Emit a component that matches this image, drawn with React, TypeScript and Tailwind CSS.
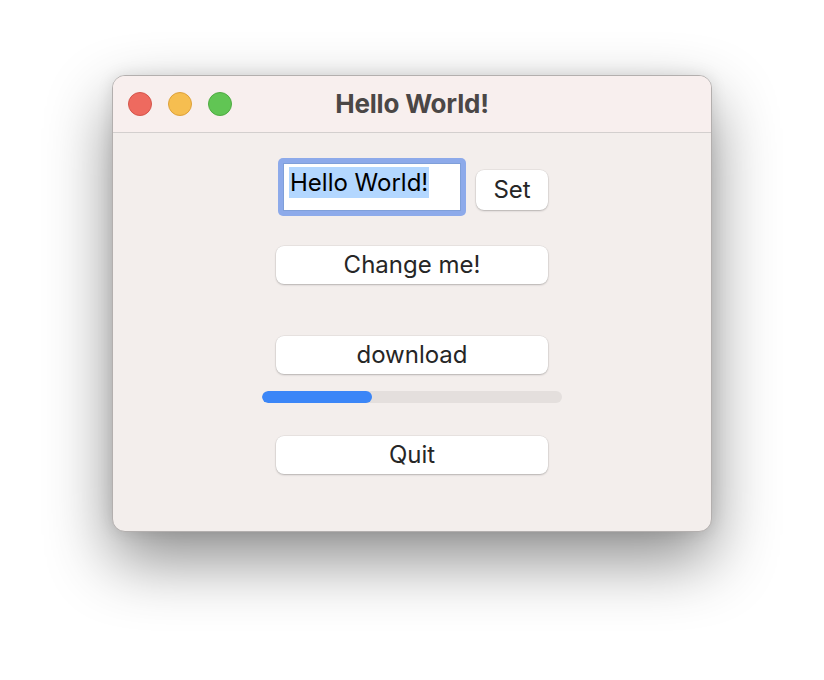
import { useState } from 'react';

const FONT = "font-['Inter','Noto_Sans',sans-serif]";

function MacButton({ label, className = '' }: { label: string; className?: string }) {
  return (
    <button
      className={`h-[38px] rounded-[8px] bg-white text-[24px] leading-none text-[#262626] shadow-[0_1px_2px_rgba(0,0,0,0.22),0_0_0_0.5px_rgba(0,0,0,0.08)] ${className}`}
    >
      {label}
    </button>
  );
}

export default function App() {
  const [progress] = useState(36.7);

  return (
    <div className={`w-[824px] h-[680px] bg-white pt-[75px] ${FONT}`}>
      <div className="ml-[112px] w-[600px] h-[457px] rounded-[13px] overflow-hidden border border-[#b3afae] bg-[#f3eeec] shadow-[0_28px_65px_rgba(0,0,0,0.45),0_0_16px_rgba(0,0,0,0.1)] flex flex-col">
        {/* Title bar */}
        <div className="relative h-[57px] shrink-0 bg-[#f8efee] border-b border-[#d3cfce] flex items-center justify-center">
          <div className="absolute left-[15px] top-[16px] flex gap-[16px]">
            <span className="w-[24px] h-[24px] rounded-full bg-[#ee6a5f] border border-[#d5554b]" />
            <span className="w-[24px] h-[24px] rounded-full bg-[#f6be50] border border-[#dea13a]" />
            <span className="w-[24px] h-[24px] rounded-full bg-[#61c554] border border-[#4fab42]" />
          </div>
          <span className="text-[26px] font-bold text-[#4b4746] tracking-[-0.2px] -mt-[2px]">Hello World!</span>
        </div>

        {/* Content */}
        <div className="flex flex-col items-center pt-[25px]">
          <div className="flex items-start gap-[10px] pl-[2px]">
            <div className="w-[188px] h-[58px] rounded-[5px] bg-[#8daaea] p-[5px]">
              <div className="w-full h-full bg-white border border-[#7f9fd9] flex items-start px-[5px] pt-[3px]">
                <span className="bg-[#b3d7ff] text-[24px] leading-[31px] text-black px-[1px] whitespace-nowrap">Hello World!</span>
              </div>
            </div>
            <MacButton label="Set" className="w-[72px] h-[40px] mt-[12px]" />
          </div>

          <MacButton label="Change me!" className="w-[272px] mt-[30px]" />

          <MacButton label="download" className="w-[272px] mt-[52px]" />

          <div className="w-[300px] h-[12px] mt-[17px] rounded-full bg-[#e4dfdd] overflow-hidden">
            <div className="h-full rounded-full bg-[#3b86f7]" style={{ width: `${progress}%` }} />
          </div>

          <MacButton label="Quit" className="w-[272px] mt-[33px]" />
        </div>
      </div>
    </div>
  );
}
